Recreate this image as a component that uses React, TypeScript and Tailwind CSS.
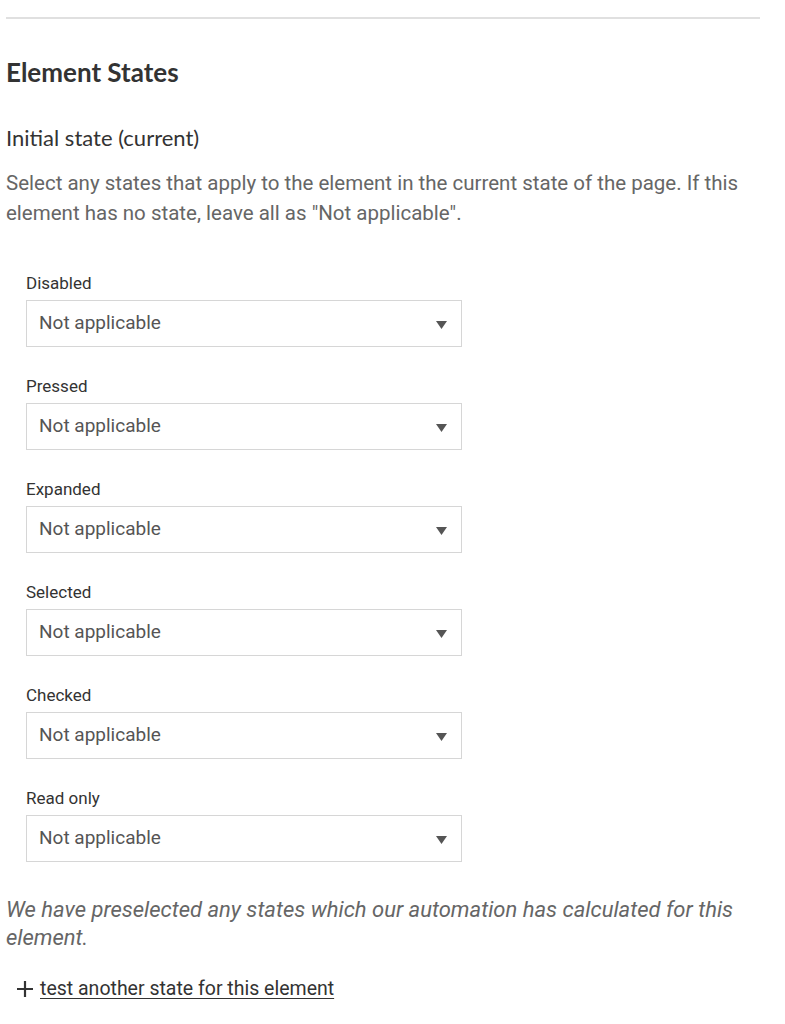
import React from "react";

const states = ["Disabled", "Pressed", "Expanded", "Selected", "Checked", "Read only"];

function Select({ label }: { label: string }) {
  return (
    <div className="mb-[29px] ml-[20px] w-[436px]">
      <div className="text-[17px] leading-[20px] text-[#333] mb-[7px]" style={{ fontFamily: "Roboto, sans-serif" }}>
        {label}
      </div>
      <div className="relative h-[47px] border border-[#d6d6d6] bg-white flex items-center pl-[12px]">
        <span className="text-[19px] text-[#555]" style={{ fontFamily: "Roboto, sans-serif" }}>
          Not applicable
        </span>
        <svg className="absolute right-[14px] top-[20px]" width="11" height="8" viewBox="0 0 11 8">
          <path d="M0 0 L11 0 L5.5 8 Z" fill="#555" />
        </svg>
      </div>
    </div>
  );
}

export default function App() {
  return (
    <div className="bg-white min-h-[1024px] w-[785px] pl-[6px] pt-[17px]">
      <div className="w-[754px] border-t-2 border-[#e0e0e0]" />
      <h2
        className="mt-[37px] text-[26px] font-bold text-[#333] leading-[32px]"
        style={{ fontFamily: "Lato, sans-serif" }}
      >
        Element States
      </h2>
      <div className="mt-[35px] text-[22px] text-[#333] leading-[30px]" style={{ fontFamily: "Lato, sans-serif" }}>
        Initial state (current)
      </div>
      <p className="mt-[15px] text-[20.5px] text-[#666] leading-[30px] w-[754px]" style={{ fontFamily: "Roboto, sans-serif" }}>
        Select any states that apply to the element in the current state of the page. If this element has no state,
        leave all as "Not applicable".
      </p>
      <div className="mt-[45px]">
        {states.map((s) => (
          <Select key={s} label={s} />
        ))}
      </div>
      <p
        className="mt-[34px] italic text-[22px] text-[#666] leading-[28px] w-[754px]"
        style={{ fontFamily: "Roboto, sans-serif" }}
      >
        We have preselected any states which our automation has calculated for this element.
      </p>
      <div className="mt-[25px] ml-[11px] flex items-center gap-[7px] leading-[24px]">
        <svg width="16" height="16" viewBox="0 0 16 16">
          <path d="M8 0 V16 M0 8 H16" stroke="#333" strokeWidth="2.2" />
        </svg>
        <span
          className="text-[19.5px] text-[#333] underline underline-offset-[3px]"
          style={{ fontFamily: "Roboto, sans-serif" }}
        >
          test another state for this element
        </span>
      </div>
    </div>
  );
}
